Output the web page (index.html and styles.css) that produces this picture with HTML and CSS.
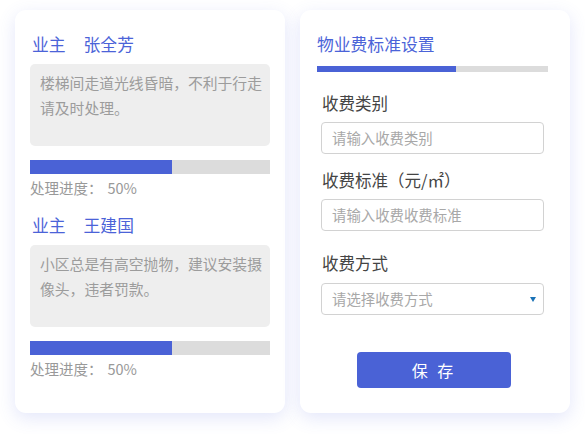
FILE: index.html
```html
<!DOCTYPE html>
<html lang="zh-CN">
<head>
<meta charset="utf-8">
<title>物业费</title>
<link rel="stylesheet" href="styles.css">
</head>
<body>
<div class="page">
  <section class="card left">
    <div class="item">
      <div class="owner"><span>业主</span><span class="name">张全芳</span></div>
      <div class="msg">楼梯间走道光线昏暗，不利于行走请及时处理。</div>
      <div class="bar"><div class="fill" style="width:59%"></div></div>
      <div class="progress">处理进度：<span class="pct">50%</span></div>
    </div>
    <div class="item">
      <div class="owner"><span>业主</span><span class="name">王建国</span></div>
      <div class="msg">小区总是有高空抛物，建议安装摄像头，违者罚款。</div>
      <div class="bar"><div class="fill" style="width:59%"></div></div>
      <div class="progress">处理进度：<span class="pct">50%</span></div>
    </div>
  </section>
  <section class="card right">
    <div class="title">物业费标准设置</div>
    <div class="tbar"><div class="tfill" style="width:60%"></div></div>
    <div class="form">
      <div class="label first">收费类别</div>
      <div class="field">请输入收费类别</div>
      <div class="label">收费标准（元/㎡）</div>
      <div class="field">请输入收费收费标准</div>
      <div class="label third">收费方式</div>
      <div class="field select">请选择收费方式<span class="arrow"></span></div>
    </div>
    <div class="btnrow"><div class="btn">保 存</div></div>
  </section>
</div>
</body>
</html>
```
FILE: styles.css
```css
* { box-sizing: border-box; }
html, body { margin: 0; padding: 0; background: #ffffff; }
body {
  font-family: "Noto Sans CJK SC", "Noto Sans", sans-serif;
  width: 585px;
  height: 434px;
  overflow: hidden;
}
.page {
  display: flex;
  gap: 15px;
  padding: 10px 15px;
}
.card {
  width: 270px;
  height: 403px;
  background: #fff;
  border-radius: 11px;
  box-shadow: 0 5px 18px rgba(80, 100, 225, 0.16);
}
.left { padding: 23px 15px 0 15px; }
.item + .item { margin-top: 16px; }
.owner {
  color: #4b63d8;
  font-size: 16.8px;
  line-height: 22px;
  height: 22px;
  padding-left: 2px;
  display: flex;
}
.owner .name { margin-left: 18px; }
.msg {
  margin-top: 9px;
  height: 82px;
  background: #eeeeee;
  border-radius: 5px;
  padding: 6px 6px 0 10px;
  color: #9c9c9c;
  font-size: 14.8px;
  line-height: 25px;
}
.bar {
  margin-top: 14px;
  height: 14px;
  background: #dcdcdc;
}
.fill { height: 100%; background: #4a62d6; }
.progress {
  margin-top: 4px;
  line-height: 20px;
  font-size: 14.5px;
  color: #999;
}
.pct { margin-left: 5px; }
.right { padding: 23px 22px 0 17px; }
.title {
  color: #4b63d8;
  font-size: 16.8px;
  line-height: 22px;
}
.tbar {
  margin-top: 11px;
  height: 6px;
  background: #dcdcdc;
  width: 231px;
}
.tfill { height: 100%; background: #4a62d6; }
.form { padding-left: 4px; }
.label {
  margin-top: 15px;
  font-size: 16.5px;
  line-height: 22px;
  color: #444;
  padding-left: 1px;
}
.label.first { margin-top: 20px; }
.label.third { margin-top: 21px; }
.field {
  margin-top: 8px;
  width: 223px;
  height: 32px;
  border: 1px solid #d2d2d2;
  border-radius: 4px;
  padding-left: 10px;
  font-size: 14.4px;
  line-height: 30px;
  color: #a8a8a8;
  position: relative;
}
.select { margin-top: 9px; }
.arrow {
  position: absolute;
  right: 7px;
  top: 13px;
  width: 0;
  height: 0;
  border-left: 3px solid transparent;
  border-right: 3px solid transparent;
  border-top: 5px solid #1a72b6;
}
.btnrow {
  display: flex;
  justify-content: center;
  margin-top: 37px;
  padding-left: 3px;
}
.btn {
  width: 154px;
  height: 36px;
  background: #4a62d6;
  border-radius: 4px;
  color: #fff;
  font-size: 16px;
  line-height: 36px;
  text-align: center;
  letter-spacing: 3px;
}
```
